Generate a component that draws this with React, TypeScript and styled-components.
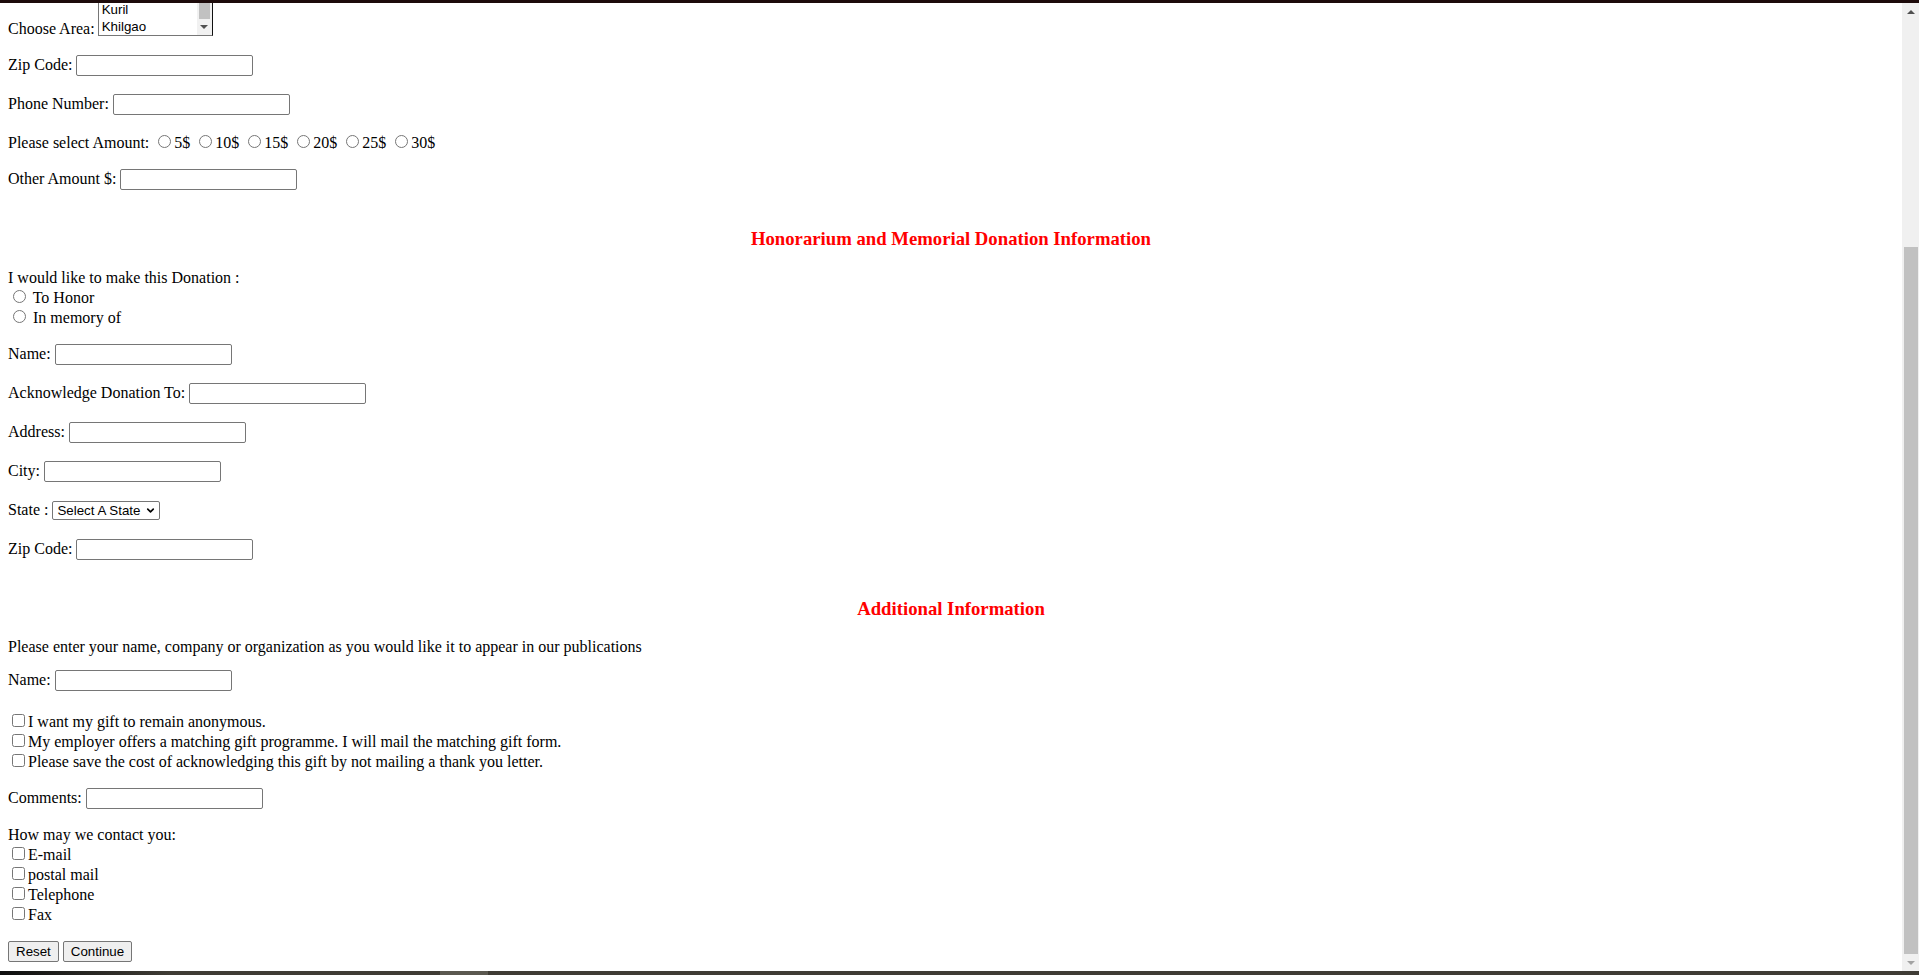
import styled, { createGlobalStyle } from "styled-components"
import { ChevronDown } from "lucide-react"

const GlobalStyle = createGlobalStyle`
  html, body {
    margin: 0;
    padding: 0;
    height: 100%;
    overflow: hidden;
    background: #fff;
  }
  #root {
    height: 100%;
  }
`

const Screen = styled.div`
  height: 100vh;
  display: flex;
  flex-direction: column;
`
const TopBar = styled.div`
  flex: none;
  height: 3px;
  background: #1d0b0b;
`
const BottomBar = styled.div`
  flex: none;
  height: 4px;
  background: linear-gradient(
    90deg,
    #0e0e0e 0,
    #3f3c35 170px,
    #3f3c35 440px,
    #5b5850 440px,
    #5b5850 488px,
    #3f3c35 488px
  );
`
const Main = styled.div`
  flex: 1;
  min-height: 0;
  display: flex;
`
const Content = styled.div`
  flex: 1;
  overflow: hidden;
  padding: 0 8px;
  font: 16px "Liberation Serif", "Times New Roman", serif;
  color: #000;
`
const Form = styled.form`
  margin-top: -53px;
`
const Para = styled.p<{ $top?: number; $bottom?: number }>`
  margin: ${({ $top = 16 }) => $top}px 0 ${({ $bottom = 16 }) => $bottom}px;
  line-height: normal;
`
const SectionTitle = styled.h3`
  margin: 37px 0 18.72px;
  font-size: 18.72px;
  font-weight: bold;
  text-align: center;
  color: #ff0000;
`

/* page scrollbar */
const Scrollbar = styled.div`
  flex: none;
  width: 17px;
  background: #f0f0f0;
  display: flex;
  flex-direction: column;
`
const ScrollArrow = styled.div<{ $down?: boolean }>`
  flex: none;
  height: 17px;
  display: flex;
  align-items: center;
  justify-content: center;
  &::before {
    content: "";
    border-left: 4px solid transparent;
    border-right: 4px solid transparent;
    ${({ $down }) =>
      $down ? "border-top: 4px solid #a3a3a3;" : "border-bottom: 4px solid #505050;"}
  }
`
const ScrollTrack = styled.div`
  flex: 1;
  display: flex;
  flex-direction: column;
  justify-content: flex-end;
  padding: 0 1px 0 2px;
`
const ScrollThumb = styled.div`
  height: 707px;
  background: #c1c1c1;
`

/* form widgets */
const TextInput = styled.input`
  box-sizing: border-box;
  width: 177px;
  height: 21px;
  margin: 1px 0;
  padding: 1px 2px;
  border: 1px solid #767676;
  border-radius: 2px;
  font: 13.33px "Liberation Sans", Arial, sans-serif;
  vertical-align: baseline;
`
const Radio = styled.input.attrs({ type: "radio" })<{ $raised?: boolean }>`
  width: 13px;
  height: 13px;
  margin: ${({ $raised }) => ($raised ? "3px 3px 2px 5px" : "3px 3px 0 5px")};
`
const Check = styled.input.attrs({ type: "checkbox" })`
  width: 13px;
  height: 13px;
  margin: 3px 3px 3px 4px;
`
const Button = styled.button`
  box-sizing: border-box;
  height: 21px;
  margin: 1px 0;
  padding: 1px 7px;
  border: 1px solid #767676;
  border-radius: 2px;
  background: #efefef;
  color: #000;
  font: 13.33px "Liberation Sans", Arial, sans-serif;
`

const ListBox = styled.div`
  display: inline-flex;
  vertical-align: bottom;
  box-sizing: border-box;
  width: 115px;
  height: 70px;
  margin: 0 0 2px 3px;
  border: 1px solid #767676;
  border-right-color: #111;
  background: #fff;
  font: 13.33px "Liberation Sans", Arial, sans-serif;
`
const OptionList = styled.div`
  flex: 1;
  display: flex;
  flex-direction: column;
  justify-content: flex-end;
  overflow: hidden;
`
const OptionRow = styled.div`
  height: 17px;
  line-height: 17px;
  padding: 0 2px 0 3px;
  white-space: nowrap;
`
const ListScroll = styled.div`
  flex: none;
  width: 15px;
  display: flex;
  flex-direction: column;
  background: #f1f1f1;
`
const ListThumb = styled.div`
  flex: 1;
  margin: 0 2px;
  background: #c1c1c1;
`
const ListArrow = styled.div`
  flex: none;
  height: 16px;
  display: flex;
  align-items: center;
  justify-content: center;
  &::before {
    content: "";
    border-left: 4px solid transparent;
    border-right: 4px solid transparent;
    border-top: 4px solid #505050;
  }
`

const SelectWrap = styled.span`
  position: relative;
  display: inline-block;
  vertical-align: baseline;
  margin: 2px 0;
  svg {
    position: absolute;
    right: 4px;
    top: 4px;
    pointer-events: none;
  }
`
const Select = styled.select`
  appearance: none;
  box-sizing: border-box;
  width: 108px;
  height: 19px;
  padding: 0 18px 0 4px;
  border: 1px solid #767676;
  border-radius: 2px;
  background: #fff;
  color: #000;
  font: 13.33px "Liberation Sans", Arial, sans-serif;
`

const amounts = ["5$", "10$", "15$", "20$", "25$", "30$"]
const areas = ["Banani", "Gulshan", "Kuril", "Khilgao"]

function Field({ label, top, bottom }: { label: string; top?: number; bottom?: number }) {
  return (
    <Para $top={top} $bottom={bottom}>
      {label} <TextInput type="text" />
    </Para>
  )
}

export default function App() {
  return (
    <Screen>
      <GlobalStyle />
      <TopBar />
      <Main>
        <Content>
          <Form onSubmit={(e) => e.preventDefault()}>
            <Para>
              Choose Area:
              <ListBox role="listbox">
                <OptionList>
                  {areas.map((a) => (
                    <OptionRow key={a} role="option">
                      {a}
                    </OptionRow>
                  ))}
                </OptionList>
                <ListScroll>
                  <ListThumb />
                  <ListArrow />
                </ListScroll>
              </ListBox>
            </Para>
            <Field label="Zip Code:" />
            <Field label="Phone Number:" />
            <Para>
              Please select Amount:{" "}
              {amounts.map((a) => (
                <span key={a}>
                  <Radio name="amount" $raised />
                  {a}{" "}
                </span>
              ))}
            </Para>
            <Field label="Other Amount $:" />

            <SectionTitle>Honorarium and Memorial Donation Information</SectionTitle>
            <Para>
              I would like to make this Donation :
              <br />
              <Radio name="kind" /> To Honor
              <br />
              <Radio name="kind" /> In memory of
            </Para>
            <Field label="Name:" />
            <Field label="Acknowledge Donation To:" />
            <Field label="Address:" />
            <Field label="City:" />
            <Para>
              State :{" "}
              <SelectWrap>
                <Select defaultValue="">
                  <option value="">Select A State</option>
                </Select>
                <ChevronDown size={11} strokeWidth={3.5} />
              </SelectWrap>
            </Para>
            <Field label="Zip Code:" />

            <SectionTitle>Additional Information</SectionTitle>
            <Para $bottom={13}>
              Please enter your name, company or organization as you would like it to
              appear in our publications
            </Para>
            <Field label="Name:" top={13} bottom={19} />
            <Para>
              <Check />I want my gift to remain anonymous.
              <br />
              <Check />My employer offers a matching gift programme. I will mail the
              matching gift form.
              <br />
              <Check />Please save the cost of acknowledging this gift by not mailing a
              thank you letter.
            </Para>
            <Field label="Comments:" />
            <Para>
              How may we contact you:
              <br />
              <Check />E-mail
              <br />
              <Check />postal mail
              <br />
              <Check />Telephone
              <br />
              <Check />Fax
            </Para>
            <Para>
              <Button type="reset">Reset</Button> <Button type="submit">Continue</Button>
            </Para>
          </Form>
        </Content>
        <Scrollbar>
          <ScrollArrow />
          <ScrollTrack>
            <ScrollThumb />
          </ScrollTrack>
          <ScrollArrow $down />
        </Scrollbar>
      </Main>
      <BottomBar />
    </Screen>
  )
}
